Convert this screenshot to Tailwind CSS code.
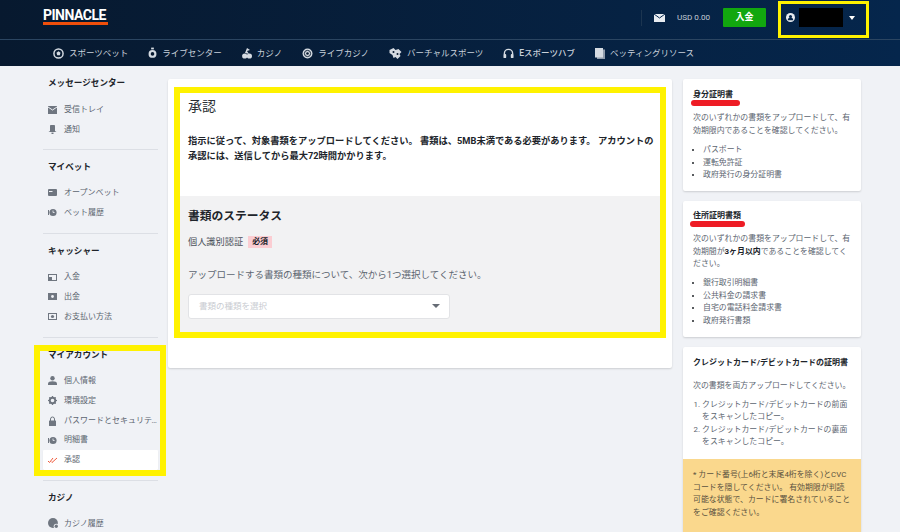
<!DOCTYPE html>
<html lang="ja">
  <head>
    <meta charset="UTF-8" />
    <title>承認</title>
    <script src="https://cdn.jsdelivr.net/npm/@tailwindcss/browser@4"></script>
  </head>
  <body class="relative h-[532px] w-[900px] overflow-hidden bg-[#f0f2f6] font-['Roboto','Noto_Sans_CJK_JP',sans-serif]">
    <!-- Header -->
    <header class="h-[66px] bg-gradient-to-r from-[#07192f] to-[#05264c] text-[#c9d1db]">
      <div class="flex h-[40px] items-center border-b border-[#2b4561] pb-[4px] pl-[43px]">
        <div class="flex h-[16px] flex-col">
          <span class="font-['Roboto',sans-serif] text-[14px] leading-[11px] font-bold tracking-[-0.5px] text-white">PINNACLE</span>
          <span class="mt-[1px] h-[3px] w-[65px] bg-[#f04f0b]"></span>
        </div>
        <div class="ml-auto flex items-center">
          <span class="h-[16px] w-px bg-[#1c3550]"></span>
          <svg class="ml-[12px] h-[8px] w-[11px]" viewBox="0 0 11 8"><rect width="11" height="8" fill="#e8ecf1"/><path d="M0 0l5.500 4L11 0" fill="none" stroke="#05264c" stroke-width="1"/></svg>
          <span class="ml-[12px] w-[33px] text-[8.100px] whitespace-nowrap text-[#c4ccd6]">USD 0.00</span>
          <span class="ml-[13px] flex h-[19px] w-[43px] items-center justify-center rounded-[1px] bg-[#12a70f] text-[9px] font-bold text-white">入金</span>
          <svg class="ml-[20px] h-[9px] w-[9px]" viewBox="0 0 10 10"><circle cx="5" cy="5" r="5" fill="#e8ecf1"/><circle cx="5" cy="3.800" r="1.700" fill="#05264c"/><path d="M2 8a3 3 0 0 1 6 0z" fill="#05264c"/></svg>
          <span class="ml-[4px] h-[19px] w-[44px] bg-black"></span>
          <span class="mr-[45px] ml-[6px] h-0 w-0 border-x-[3.500px] border-t-[4px] border-x-transparent border-t-white"></span>
        </div>
      </div>
      <nav class="flex h-[26px] items-center gap-[20px] pl-[53px] text-[8.500px] whitespace-nowrap">
        <span class="flex items-center gap-[5px]">
          <svg class="h-[11px] w-[11px]" viewBox="0 0 12 12"><circle cx="6" cy="6" r="5" fill="none" stroke="#d5dbe2" stroke-width="1.600"/><path d="M6 3.600l2.200 1.600-.8 2.600H4.600l-.8-2.600z" fill="#d5dbe2"/></svg>
          スポーツベット
        </span>
        <span class="flex items-center gap-[5px]">
          <svg class="h-[12px] w-[9px]" viewBox="0 0 10 12"><rect x="3.500" width="3" height="2" fill="#d5dbe2"/><circle cx="5" cy="7" r="4.400" fill="#d5dbe2"/><circle cx="5" cy="7" r="2" fill="#07192f"/></svg>
          ライブセンター
        </span>
        <span class="flex items-center gap-[5px]">
          <svg class="h-[12px] w-[10px]" viewBox="0 0 10 12"><circle cx="2.700" cy="9" r="2.600" fill="#d5dbe2"/><circle cx="7.400" cy="9" r="2.600" fill="#d5dbe2"/><path d="M3 6l2-5 3 2-3 1 2 3" fill="#d5dbe2"/></svg>
          カジノ
        </span>
        <span class="flex items-center gap-[5px]">
          <svg class="h-[11px] w-[11px]" viewBox="0 0 12 12"><circle cx="6" cy="6" r="5.400" fill="#d5dbe2"/><circle cx="6" cy="6" r="3.400" fill="none" stroke="#07192f" stroke-width="1"/><circle cx="6" cy="6" r="1.400" fill="#07192f"/></svg>
          ライブカジノ
        </span>
        <span class="flex items-center gap-[5px]">
          <svg class="h-[11px] w-[13px]" viewBox="0 0 12 11"><path d="M0 2l4-2 2 2 3-1 3 3-2 2 1 2-3 3-2-2-2 1-1-3-3-2z" fill="#d5dbe2"/><circle cx="4" cy="4" r="1" fill="#07192f"/><circle cx="8" cy="6" r="1" fill="#07192f"/></svg>
          バーチャルスポーツ
        </span>
        <span class="flex items-center gap-[5px] font-medium">
          <svg class="h-[11px] w-[11px]" viewBox="0 0 12 12"><path d="M1.500 7V6a4.500 4.500 0 0 1 9 0v1" fill="none" stroke="#d5dbe2" stroke-width="1.500"/><rect x="0.500" y="6.500" width="3" height="4.500" rx="1" fill="#d5dbe2"/><rect x="8.500" y="6.500" width="3" height="4.500" rx="1" fill="#d5dbe2"/></svg>
          Eスポーツハブ
        </span>
        <span class="flex items-center gap-[5px]">
          <svg class="h-[11px] w-[10px]" viewBox="0 0 10 11"><rect x="2" y="1.500" width="8" height="9.500" fill="#8f9bab"/><rect width="8" height="9.500" fill="#d5dbe2"/></svg>
          ベッティングリソース
        </span>
      </nav>
    </header>

    <!-- Body -->
    <div class="flex items-start">
      <!-- Sidebar -->
      <aside class="mt-[10px] ml-[43px] w-[115px] shrink-0 text-[8px] text-[#5c6570]">
        <section class="border-b border-[#dcdfe5] pb-[9px]">
          <h3 class="pl-[5px] text-[8.600px] leading-[14px] font-bold text-[#20242a]">メッセージセンター</h3>
          <ul class="mt-[10px]">
            <li class="flex h-[19.800px] items-center gap-[7px] pl-[5px]">
              <svg class="h-[8px] w-[9px]" viewBox="0 0 9 8"><rect width="9" height="8" fill="#6f7680"/><path d="M0 1l4.500 3L9 1" fill="none" stroke="#f0f2f6"/></svg>受信トレイ
            </li>
            <li class="flex h-[19.800px] items-center gap-[7px] pl-[5px]">
              <svg class="h-[9px] w-[9px]" viewBox="0 0 9 9"><path d="M2 1.500a2.500 2.500 0 0 1 5 0V6l1.500 1h-8L2 6z" fill="#6f7680"/><rect x="3.500" y="7.600" width="2" height="1.400" fill="#6f7680"/></svg>通知
            </li>
          </ul>
        </section>
        <section class="border-b border-[#dcdfe5] pt-[10.500px] pb-[10px]">
          <h3 class="pl-[5px] text-[8.600px] leading-[14px] font-bold text-[#20242a]">マイベット</h3>
          <ul class="mt-[9px]">
            <li class="flex h-[19.800px] items-center gap-[7px] pl-[5px]">
              <svg class="h-[7px] w-[9px]" viewBox="0 0 9 7"><rect width="9" height="7" rx="1" fill="#6f7680"/><rect x="1" y="2" width="3.500" height="1" fill="#f0f2f6"/></svg>オープンベット
            </li>
            <li class="flex h-[19.800px] items-center gap-[7px] pl-[5px]">
              <svg class="h-[9px] w-[9px]" viewBox="0 0 9 9"><circle cx="5" cy="4.500" r="3.600" fill="#6f7680"/><path d="M5 2.500v2h1.600" fill="none" stroke="#f0f2f6" stroke-width=".8"/><rect y="2" width="1" height="5" fill="#6f7680"/></svg>ベット履歴
            </li>
          </ul>
        </section>
        <section class="border-b border-[#dcdfe5] pt-[10.500px] pb-[10px]">
          <h3 class="pl-[5px] text-[8.600px] leading-[14px] font-bold text-[#20242a]">キャッシャー</h3>
          <ul class="mt-[9px]">
            <li class="flex h-[19.800px] items-center gap-[7px] pl-[5px]">
              <svg class="h-[7px] w-[9px]" viewBox="0 0 9 7"><rect x=".5" y=".5" width="8" height="6" fill="none" stroke="#6f7680"/><rect x="1" y="3" width="3" height="3" fill="#6f7680"/></svg>入金
            </li>
            <li class="flex h-[19.800px] items-center gap-[7px] pl-[5px]">
              <svg class="h-[7px] w-[9px]" viewBox="0 0 9 7"><rect width="9" height="7" fill="#6f7680"/><circle cx="4.500" cy="3.500" r="1.400" fill="#f0f2f6"/></svg>出金
            </li>
            <li class="flex h-[19.800px] items-center gap-[7px] pl-[5px]">
              <svg class="h-[7px] w-[9px]" viewBox="0 0 9 7"><rect x=".5" y=".5" width="8" height="6" fill="none" stroke="#6f7680"/><circle cx="4.500" cy="3.500" r="1.600" fill="#6f7680"/></svg>お支払い方法
            </li>
          </ul>
        </section>
        <section class="border-b border-[#dcdfe5] pt-[10.500px] pb-[10px]">
          <h3 class="pl-[5px] text-[8.600px] leading-[14px] font-bold text-[#20242a]">マイアカウント</h3>
          <ul class="mt-[9px]">
            <li class="flex h-[19.800px] items-center gap-[7px] pl-[5px]">
              <svg class="h-[9px] w-[9px]" viewBox="0 0 9 9"><circle cx="4.500" cy="2.200" r="2.200" fill="#6f7680"/><path d="M0 9V7.500c0-1.500 2-2.300 4.500-2.300S9 6 9 7.500V9z" fill="#6f7680"/></svg>個人情報
            </li>
            <li class="flex h-[19.800px] items-center gap-[7px] pl-[5px]">
              <svg class="h-[9px] w-[9px]" viewBox="0 0 9 9"><circle cx="4.500" cy="4.500" r="2.800" fill="none" stroke="#6f7680" stroke-width="2"/><path d="M4.500 0v2M4.500 7v2M0 4.500h2M7 4.500h2M1.300 1.300l1.400 1.400M6.300 6.300l1.400 1.400M7.700 1.300L6.300 2.700M2.700 6.300L1.300 7.700" stroke="#6f7680" stroke-width="1.200"/></svg>環境設定
            </li>
            <li class="flex h-[19.800px] items-center gap-[7px] pl-[5px]">
              <svg class="h-[10px] w-[9px] shrink-0" viewBox="0 0 9 10"><path d="M2.500 5V3a2 2 0 0 1 4 0v2" fill="none" stroke="#6f7680" stroke-width="1"/><rect x="1" y="4.500" width="7" height="5.500" rx=".5" fill="#6f7680"/></svg>
              <span class="truncate">パスワードとセキュリティ設定</span>
            </li>
            <li class="flex h-[19.800px] items-center gap-[7px] pl-[5px]">
              <svg class="h-[9px] w-[9px]" viewBox="0 0 9 9"><circle cx="5" cy="4.500" r="3.600" fill="#6f7680"/><path d="M5 2.500v2h1.600" fill="none" stroke="#f0f2f6" stroke-width=".8"/><rect y="2" width="1" height="5" fill="#6f7680"/></svg>明細書
            </li>
            <li class="flex h-[19.800px] items-center gap-[7px] rounded-[1px] bg-white pl-[5px] shadow-[0_1px_1px_rgba(0,0,0,0.12)]">
              <svg class="h-[7px] w-[9px]" viewBox="0 0 9 7"><path d="M0 4l1.500 1.500L5 1M3 4.500l1 1L9 1" fill="none" stroke="#ef5b3c" stroke-width="1"/></svg>承認
            </li>
          </ul>
        </section>
        <section class="pt-[10px]">
          <h3 class="pl-[5px] text-[8.600px] leading-[14px] font-bold text-[#20242a]">カジノ</h3>
          <ul class="mt-[9px]">
            <li class="flex h-[19.800px] items-center gap-[5px] pl-[5px]">
              <svg class="h-[11px] w-[11px]" viewBox="0 0 10 10"><circle cx="4.500" cy="4.500" r="4.500" fill="#6f7680"/><circle cx="7.500" cy="7.500" r="2.300" fill="#f0f2f6"/><circle cx="7.500" cy="7.500" r="1.500" fill="#6f7680"/></svg>カジノ履歴
            </li>
          </ul>
        </section>
      </aside>

      <!-- Main card -->
      <main class="mt-[13px] ml-[10px] h-[289px] w-[504px] shrink-0 rounded-[2px] bg-white px-[12px] pt-[14px] shadow-[0_1px_2px_rgba(0,0,0,0.15)]">
        <div class="h-[244px] w-[480px]">
          <div class="h-[103px] pl-[8px]">
            <h1 class="pt-[3px] text-[14px] leading-[20px] font-normal text-[#2b2f35]">承認</h1>
            <p class="mt-[17px] text-[9.250px] leading-[15px] font-bold text-[#20242a]">指示に従って、対象書類をアップロードしてください。 書類は、5MB未満である必要があります。 アカウントの承認には、送信してから最大72時間かかります。</p>
          </div>
          <div class="h-[141px] bg-[#f2f2f3] pt-[10px] pl-[8px]">
            <h2 class="text-[11.750px] leading-[20px] font-bold text-[#20242a]">書類のステータス</h2>
            <div class="mt-[9px] flex items-center">
              <span class="text-[9.200px] text-[#4a5059]">個人識別認証</span>
              <span class="ml-[5px] flex h-[12px] w-[24px] items-center justify-center bg-[#fbcdd2] text-[8px] font-bold text-[#20242a]">必須</span>
            </div>
            <p class="mt-[19px] text-[9.500px] leading-[14px] text-[#5c6570]">アップロードする書類の種類について、次から1つ選択してください。</p>
            <div class="mt-[12px] flex h-[25px] w-[262px] items-center justify-between rounded-[3px] border border-[#e2e3e6] bg-white pr-[9px] pl-[10px] text-[8.500px] text-[#c9ccd1]">
              書類の種類を選択
              <span class="h-0 w-0 border-x-[4px] border-t-[4px] border-x-transparent border-t-[#666c75]"></span>
            </div>
          </div>
        </div>
      </main>

      <!-- Info cards -->
      <div class="mt-[13px] ml-[11px] flex w-[178px] shrink-0 flex-col gap-[10px] text-[7.900px] text-[#5c6570]">
        <div class="h-[112px] rounded-[2px] bg-white pt-[9px] pr-[8px] pl-[10px] shadow-[0_1px_2px_rgba(0,0,0,0.15)]">
          <h4 class="text-[8px] leading-[14px] font-bold text-[#20242a]">身分証明書</h4>
          <p class="mt-[10px] leading-[12.500px]">次のいずれかの書類をアップロードして、有効期限内であることを確認してください。</p>
          <ul class="mt-[7px] list-outside list-disc pl-[10px] leading-[12.600px] marker:text-[#20242a]">
            <li>パスポート</li>
            <li>運転免許証</li>
            <li>政府発行の身分証明書</li>
          </ul>
        </div>
        <div class="h-[136px] rounded-[2px] bg-white pt-[8px] pr-[8px] pl-[10px] shadow-[0_1px_2px_rgba(0,0,0,0.15)]">
          <h4 class="text-[8px] leading-[14px] font-bold text-[#20242a]">住所証明書類</h4>
          <p class="mt-[10px] leading-[12.500px]">次のいずれかの書類をアップロードして、有効期間が<b class="text-[#20242a]">3ヶ月以内</b>であることを確認してください。</p>
          <ul class="mt-[6.500px] list-outside list-disc pl-[10px] leading-[12.600px] marker:text-[#20242a]">
            <li>銀行取引明細書</li>
            <li>公共料金の請求書</li>
            <li>自宅の電話料金請求書</li>
            <li>政府発行書類</li>
          </ul>
        </div>
        <div class="rounded-[2px] bg-white shadow-[0_1px_2px_rgba(0,0,0,0.15)]">
          <div class="h-[112px] pt-[9px] pr-[8px] pl-[10px]">
            <h4 class="text-[8px] leading-[14px] font-bold whitespace-nowrap text-[#20242a]">クレジットカード/デビットカードの証明書</h4>
            <p class="mt-[10px] leading-[12.500px]">次の書類を両方アップロードしてください。</p>
            <ol class="mt-[6px] list-outside list-decimal pl-[9px] leading-[12.600px]">
              <li>クレジットカード/デビットカードの前面をスキャンしたコピー。</li>
              <li>クレジットカード/デビットカードの裏面をスキャンしたコピー。</li>
            </ol>
          </div>
          <div class="h-[80px] bg-[#fad88d] pt-[10px] pr-[10px] pl-[10px] leading-[12.500px] text-[#5a5240]">* カード番号(上6桁と末尾4桁を除く)とCVCコードを隠してください。 有効期限が判読可能な状態で、カードに署名されていることをご確認ください。</div>
        </div>
      </div>
    </div>

    <!-- Annotations drawn over the screenshot -->
    <div class="absolute top-[1px] left-[778px] h-[37px] w-[91px] border-[3px] border-[#fff200]"></div>
    <div class="absolute top-[87px] left-[174px] h-[251px] w-[492px] border-[6px] border-[#fff200]"></div>
    <div class="absolute top-[345px] left-[34px] h-[131px] w-[132px] border-[6px] border-[#fff200]"></div>
    <div class="absolute top-[100px] left-[691px] h-[6px] w-[49px] rounded-full bg-[#ee1c25]"></div>
    <div class="absolute top-[221px] left-[690px] h-[6px] w-[55px] rounded-full bg-[#ee1c25]"></div>
  </body>
</html>
